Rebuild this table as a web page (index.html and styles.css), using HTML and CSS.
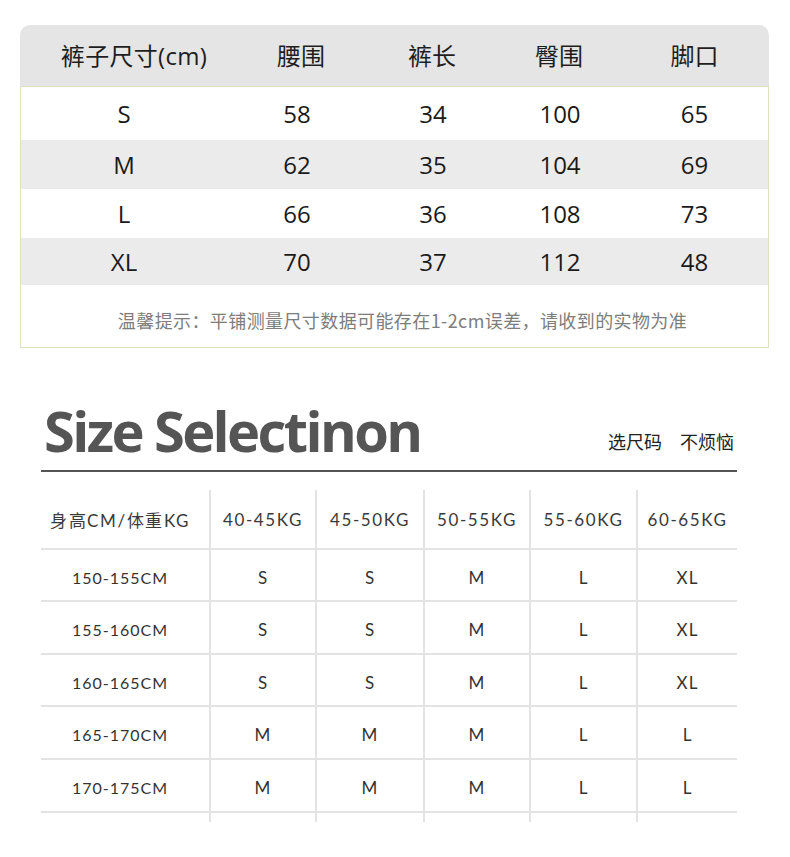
FILE: index.html
```html
<!DOCTYPE html>
<html lang="zh-CN">
<head>
<meta charset="utf-8">
<title>尺码表</title>
<link rel="stylesheet" href="styles.css">
</head>
<body>
<div class="page">
  <section class="measure">
    <div class="m-head m-cols">
      <div>裤子尺寸(cm)</div><div>腰围</div><div>裤长</div><div>臀围</div><div>脚口</div>
    </div>
    <div class="m-body">
      <div class="m-cols m-row r1"><div>S</div><div>58</div><div>34</div><div>100</div><div>65</div></div>
      <div class="m-cols m-row r2 shade"><div>M</div><div>62</div><div>35</div><div>104</div><div>69</div></div>
      <div class="m-cols m-row r3"><div>L</div><div>66</div><div>36</div><div>108</div><div>73</div></div>
      <div class="m-cols m-row r4 shade"><div>XL</div><div>70</div><div>37</div><div>112</div><div>48</div></div>
      <p class="note">温馨提示：平铺测量尺寸数据可能存在1-2cm误差，请收到的实物为准</p>
    </div>
  </section>

  <section class="select">
    <div class="sel-title">
      <h2>Size Selectinon</h2>
      <span class="slogan">选尺码<span class="gap"></span>不烦恼</span>
    </div>
    <div class="grid">
      <div class="c first head">身高CM/体重KG</div>
      <div class="c head">40-45KG</div>
      <div class="c head">45-50KG</div>
      <div class="c head">50-55KG</div>
      <div class="c head">55-60KG</div>
      <div class="c head last">60-65KG</div>

      <div class="c first">150-155CM</div><div class="c sz">S</div><div class="c sz">S</div><div class="c sz">M</div><div class="c sz">L</div><div class="c sz last">XL</div>
      <div class="c first">155-160CM</div><div class="c sz">S</div><div class="c sz">S</div><div class="c sz">M</div><div class="c sz">L</div><div class="c sz last">XL</div>
      <div class="c first">160-165CM</div><div class="c sz">S</div><div class="c sz">S</div><div class="c sz">M</div><div class="c sz">L</div><div class="c sz last">XL</div>
      <div class="c first">165-170CM</div><div class="c sz">M</div><div class="c sz">M</div><div class="c sz">M</div><div class="c sz">L</div><div class="c sz last">L</div>
      <div class="c first">170-175CM</div><div class="c sz">M</div><div class="c sz">M</div><div class="c sz">M</div><div class="c sz">L</div><div class="c sz last">L</div>

      <div class="tail"></div><div class="tail"></div><div class="tail"></div><div class="tail"></div><div class="tail"></div><div class="tail last"></div>
    </div>
  </section>
</div>
</body>
</html>
```

FILE: styles.css
```css
* { box-sizing: border-box; }
html, body { margin: 0; padding: 0; background: #fff; }
body { width: 790px; height: 857px; overflow: hidden; }

.page { padding: 25px 0 0 20px; }

/* ---------- measurement table ---------- */
.measure {
  width: 749px;
  font-family: "Open Sans", "Noto Sans CJK SC", sans-serif;
  color: #1a1a1a;
}
.m-cols {
  display: grid;
  grid-template-columns: 206px 140px 132px 122px 1fr;
  align-items: center;
  justify-items: center;
}
.m-head {
  height: 61px;
  background: #e5e5e5;
  border-radius: 10px 10px 0 0;
  font-size: 24px;
  color: #1e1e1e;
  padding-bottom: 2px;
}
.m-head > div:first-child { padding-left: 22px; letter-spacing: 0.3px; }
.m-head > div:nth-child(2) { padding-left: 10px; }
.m-body {
  border: 1px solid #dfe2c2;
}
.m-row { font-size: 24px; }
.r1 { height: 53px; padding-bottom: 1px; }
.r2 { height: 49px; }
.r3 { height: 49px; }
.r4 { height: 47px; }
.shade { background: #ebebeb; }
.note {
  margin: 0;
  height: 62px;
  display: flex;
  align-items: center;
  justify-content: center;
  padding-left: 16px;
  padding-top: 8px;
  font-family: "Noto Sans CJK SC", "Open Sans", sans-serif;
  font-size: 18px;
  letter-spacing: 0.4px;
  color: #7d7d7d;
}

/* ---------- size selection ---------- */
.select { width: 696px; margin-left: 21px; }
.sel-title {
  margin-top: 54px;
  display: flex;
  justify-content: space-between;
  align-items: flex-end;
  padding: 0 3px 12px 3px;
  border-bottom: 2px solid #555;
}
.sel-title h2 {
  margin: 0;
  font-family: "Open Sans", sans-serif;
  font-weight: 700;
  font-size: 56px;
  line-height: 56px;
  letter-spacing: -2.6px;
  color: #555;
}
.slogan {
  font-family: "Noto Sans CJK SC", sans-serif;
  font-size: 18px;
  line-height: 18px;
  color: #222;
  padding-bottom: 8px;
}
.gap { display: inline-block; width: 18px; }

.grid {
  margin-top: 18px;
  display: grid;
  grid-template-columns: 170px 106px 108px 106px 107px 99px;
  grid-template-rows: 60px 52px 53px 52px 53px 53px 9px;
  font-family: "Lato", sans-serif;
  font-size: 16px;
  color: #333;
}
.c {
  display: flex;
  align-items: center;
  justify-content: center;
  border-right: 2px solid #e3e3e3;
  border-bottom: 2px solid #e3e3e3;
  padding-top: 4px;
  letter-spacing: 1px;
}
.c.head { padding-top: 0; color: #3a3a3a; font-size: 17px; letter-spacing: 1.6px; }
.c.sz { font-size: 17px; }
.c.first { padding-right: 10px; }
.c.last { border-right: none; }
.tail { border-right: 2px solid #e3e3e3; }
.tail.last { border-right: none; }
```
